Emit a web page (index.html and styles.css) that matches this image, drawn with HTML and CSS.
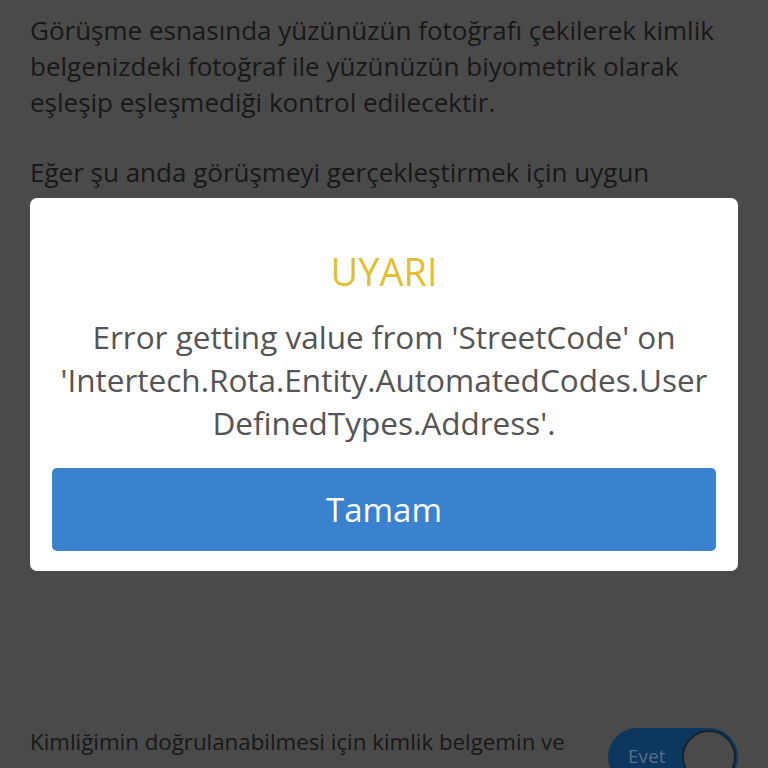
FILE: index.html
```html
<!DOCTYPE html>
<html lang="tr">
<head>
<meta charset="utf-8">
<title>Uyarı</title>
<link rel="stylesheet" href="styles.css">
</head>
<body>
<div class="page">
  <div class="content">
    <p class="para">Görüşme esnasında yüzünüzün fotoğrafı çekilerek kimlik belgenizdeki fotoğraf ile yüzünüzün biyometrik olarak eşleşip eşleşmediği kontrol edilecektir.</p>
    <p class="para">Eğer şu anda görüşmeyi gerçekleştirmek için uygun değilseniz daha sonra arayınız.</p>
  </div>
  <div class="consent">
    <p class="consent-text">Kimliğimin doğrulanabilmesi için kimlik belgemin ve yüzümün fotoğrafının çekilmesine onay veriyorum.</p>
    <div class="toggle">
      <span class="toggle-label">Evet</span>
      <span class="toggle-knob"></span>
    </div>
  </div>
</div>
<div class="modal">
  <h2 class="modal-title">UYARI</h2>
  <p class="modal-message">Error getting value from 'StreetCode' on 'Intertech.Rota.Entity.AutomatedCodes.User<br>DefinedTypes.Address'.</p>
  <button class="modal-button">Tamam</button>
</div>
</body>
</html>
```
FILE: styles.css
```css
html, body {
  margin: 0;
  padding: 0;
  height: 768px;
  overflow: hidden;
}
body {
  background: #4a4a4a;
  font-family: "Open Sans", "Noto Sans", sans-serif;
}
.page {
  height: 768px;
  display: flex;
  flex-direction: column;
  padding: 12px 30px 0;
  box-sizing: border-box;
}
.para {
  margin: 0 0 34px;
  font-size: 26px;
  line-height: 36px;
  color: #181818;
}
.consent {
  margin-top: auto;
  height: 44px;
  display: flex;
  align-items: flex-start;
  gap: 20px;
}
.consent-text {
  margin: 0;
  flex: 1;
  font-size: 22.3px;
  line-height: 36px;
  color: #181818;
}
.toggle {
  flex: none;
  margin-top: 4px;
  width: 130px;
  height: 58px;
  border-radius: 29px;
  background: #0d375f;
  display: flex;
  align-items: center;
  justify-content: space-between;
  padding: 0 2px 0 20px;
  box-sizing: border-box;
}
.toggle-label {
  font-size: 19px;
  color: #56708c;
  margin-top: -2px;
}
.toggle-knob {
  width: 54px;
  height: 54px;
  border-radius: 50%;
  background: #4a4a4a;
  border: 2px solid #17222d;
  box-sizing: border-box;
}
.modal {
  position: absolute;
  left: 30px;
  top: 198px;
  width: 708px;
  height: 373px;
  box-sizing: border-box;
  background: #ffffff;
  border-radius: 7px;
  padding: 46px 14px 20px;
  display: flex;
  flex-direction: column;
  align-items: stretch;
  text-align: center;
}
.modal-title {
  margin: 0;
  font-size: 38px;
  line-height: 54px;
  font-weight: 400;
  color: #e3bf2f;
}
.modal-message {
  margin: 17px 0 0;
  font-size: 31.5px;
  line-height: 43px;
  color: #545454;
}
.modal-button {
  margin: auto 8px 0;
  height: 83px;
  border: none;
  border-radius: 5px;
  background: #3a82ce;
  color: #ffffff;
  font-family: inherit;
  font-size: 33px;
  padding: 0;
}
```
